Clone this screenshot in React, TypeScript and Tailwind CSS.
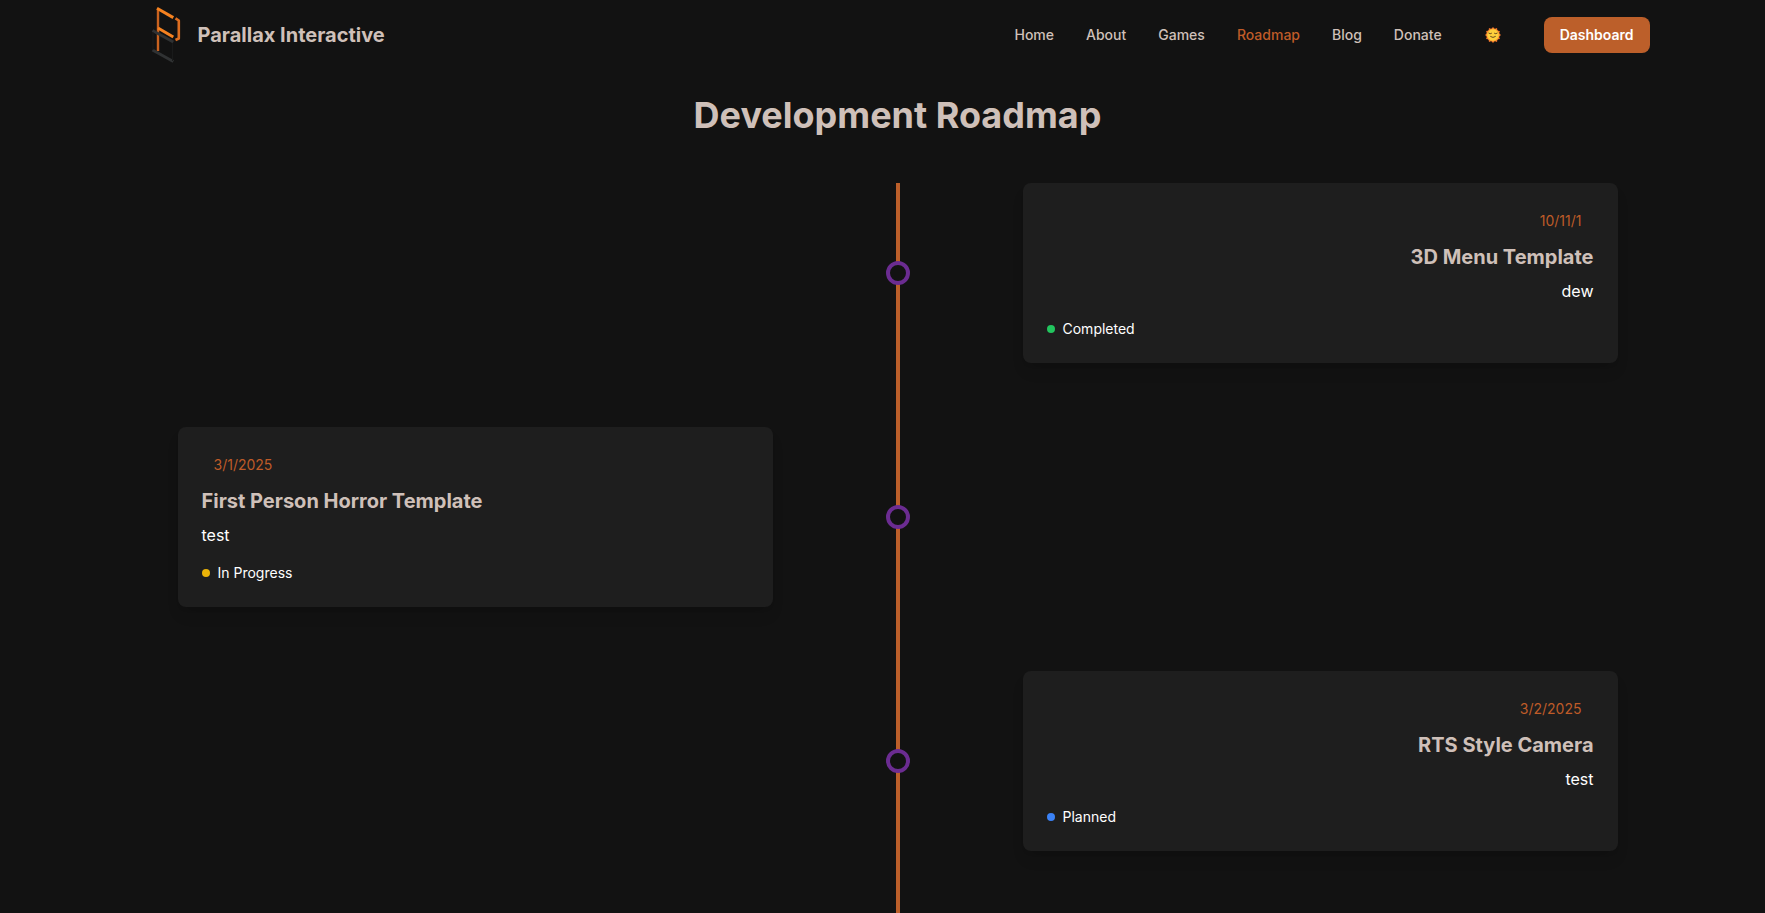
type Status = 'Completed' | 'In Progress' | 'Planned';

interface Milestone {
  date: string;
  title: string;
  description: string;
  status: Status;
  side: 'left' | 'right';
}

const links = ['Home', 'About', 'Games', 'Roadmap', 'Blog', 'Donate'];

const milestones: Milestone[] = [
  { date: '10/11/1', title: '3D Menu Template', description: 'dew', status: 'Completed', side: 'right' },
  { date: '3/1/2025', title: 'First Person Horror Template', description: 'test', status: 'In Progress', side: 'left' },
  { date: '3/2/2025', title: 'RTS Style Camera', description: 'test', status: 'Planned', side: 'right' },
];

const statusColors: Record<Status, string> = {
  Completed: 'bg-[#22c55e]',
  'In Progress': 'bg-[#eab308]',
  Planned: 'bg-[#3b82f6]',
};

function Logo() {
  return (
    <svg viewBox="0 0 52 70" className="h-[70px] w-[52px]" fill="none" aria-hidden="true">
      <path d="M12 51V9" stroke="#c9621f" strokeWidth="2.4" />
      <g stroke="#f58220" strokeWidth="3">
        <path d="M11 8.300 27.300 17.600" />
        <path d="M12 28 27.300 37" />
      </g>
      <path d="M29.500 18.300 32.800 20.500V38.500L29.500 40" stroke="#dc6d20" strokeWidth="2.600" strokeLinejoin="round" />
      <g stroke="#303233" strokeWidth="3">
        <path d="M6.500 30.500 27.300 42" />
        <path d="M6.500 50 27.300 61.500" />
      </g>
      <g stroke="#191a1a" strokeWidth="1">
        <path d="M7 32v18M26.500 43v18" />
      </g>
    </svg>
  );
}

function SunFace() {
  const rays = Array.from({ length: 12 }, (_, i) => i * 30);
  return (
    <svg viewBox="0 0 16 16" className="size-4" aria-hidden="true">
      {rays.map((angle) => (
        <path key={angle} d="M5.800 2.600 8 0 10.200 2.600Z" fill="#f4742b" transform={`rotate(${angle} 8 8)`} />
      ))}
      <circle cx="8" cy="8" r="6.500" fill="#fa9a30" />
      <circle cx="8" cy="8" r="5.700" fill="#fdd03c" />
      <g fill="none" stroke="#6b4a1e" strokeWidth="1" strokeLinecap="round">
        <path d="M3.800 6.200Q5.200 7.400 6.500 6.400" />
        <path d="M9.500 6.400Q10.800 7.400 12.200 6.200" />
        <path d="M5.600 9.600Q8 11.500 10.400 9.600" />
      </g>
    </svg>
  );
}

function Card({ item }: { item: Milestone }) {
  const right = item.side === 'right';
  return (
    <article
      className={`row-start-1 rounded-lg bg-[#1e1e1e] p-6 shadow-lg ${right ? 'col-start-3 text-right' : 'col-start-1 text-left'}`}
    >
      <time className="mb-2 block px-3 py-1 text-sm text-[#bf5b28]">{item.date}</time>
      <h2 className="mb-2 text-xl font-bold text-[#cfc0b9]">{item.title}</h2>
      <p className="text-base text-white">{item.description}</p>
      <div className="mt-4 flex items-center gap-2 text-sm text-white">
        <span className={`size-2 rounded-full ${statusColors[item.status]}`} />
        <span>{item.status}</span>
      </div>
    </article>
  );
}

export default function App() {
  return (
    <div className="flex min-h-screen flex-col bg-[#121212] pl-[30px] font-['Inter',sans-serif] text-[#cfc0b9]">
      <header className="border-b border-[#121212]">
        <div className="mx-auto flex h-[70px] w-full max-w-[1536px] items-center justify-between px-4">
          <a href="#" className="flex items-center text-xl font-bold">
            <Logo />
            <span>Parallax Interactive</span>
          </a>
          <nav className="flex items-center text-sm font-medium">
            <div className="flex items-center gap-8">
              {links.map((label) => (
                <a key={label} href="#" className={label === 'Roadmap' ? 'text-[#bf5b28]' : ''}>
                  {label}
                </a>
              ))}
            </div>
            <button type="button" aria-label="Toggle theme" className="mx-8 flex h-9 w-[38px] items-center justify-center">
              <SunFace />
            </button>
            <button type="button" className="h-9 rounded-lg bg-[#bc5f2a] px-4 font-semibold text-white">
              Dashboard
            </button>
          </nav>
        </div>
      </header>

      <main className="mx-auto flex w-full max-w-[1536px] flex-1 flex-col px-12 pt-6">
        <h1 className="mb-12 text-center text-4xl leading-10 font-bold">Development Roadmap</h1>
        <section className="relative flex flex-1 flex-col gap-16">
          <div className="absolute inset-y-0 left-1/2 w-1 -translate-x-1/2 bg-[#bc5f2a]" />
          {milestones.map((item) => (
            <div key={item.title} className="relative grid grid-cols-[1fr_250px_1fr] items-center">
              <div className="col-start-2 row-start-1 size-6 justify-self-center rounded-full border-4 border-[#6b2c91] bg-[#121212]" />
              <Card item={item} />
            </div>
          ))}
        </section>
      </main>
    </div>
  );
}
